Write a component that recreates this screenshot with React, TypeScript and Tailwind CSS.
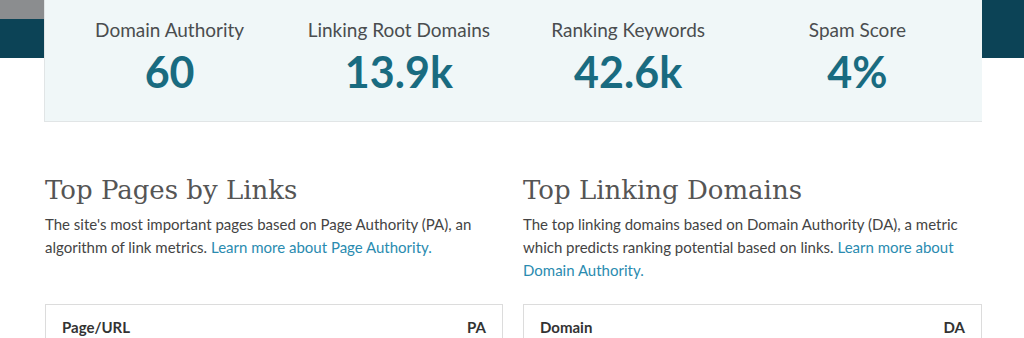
import React from "react";

const stats = [
  { label: "Domain Authority", value: "60" },
  { label: "Linking Root Domains", value: "13.9k" },
  { label: "Ranking Keywords", value: "42.6k" },
  { label: "Spam Score", value: "4%" },
];

function Band({ gray }: { gray: boolean }) {
  return (
    <div className="w-full flex flex-col">
      {gray && <div className="h-[19px] bg-[#8b8d8f]" />}
      <div className={gray ? "h-[39px] bg-[#0c4356]" : "h-[58px] bg-[#0c4356]"} />
    </div>
  );
}

const headingStyle = { fontFamily: "'DejaVu Serif', serif" };

export default function App() {
  return (
    <div
      className="w-[1024px] h-[338px] bg-white overflow-hidden text-[#444]"
      style={{ fontFamily: "Lato, 'Noto Sans', sans-serif" }}
    >
      <div className="flex">
        <div className="w-[44px] shrink-0">
          <Band gray />
        </div>
        <div className="w-[938px] h-[122px] bg-[#f0f7f8] border-b border-l border-[#e1e5e6] grid grid-cols-4 px-[10px]">
          {stats.map((s) => (
            <div key={s.label} className="flex flex-col items-center pt-[17px]">
              <div className="text-[19px] leading-[26px] text-[#4a4d4f]">{s.label}</div>
              <div className="text-[43px] leading-[48px] font-bold text-[#196b80] mt-[5px]">{s.value}</div>
            </div>
          ))}
        </div>
        <div className="flex-1">
          <Band gray={false} />
        </div>
      </div>

      <div className="grid grid-cols-[458px_459px] pl-[45px] gap-x-[20px] mt-[52px]">
        <div>
          <h2 className="text-[26px] leading-[32px] text-[#555]" style={headingStyle}>
            Top Pages by Links
          </h2>
          <p className="mt-[7px] text-[15px] leading-[23px] text-[#444]">
            The site's most important pages based on Page Authority (PA), an algorithm of link metrics.{" "}
            <a className="text-[#2a8bb0]">Learn more about Page Authority.</a>
          </p>
        </div>
        <div>
          <h2 className="text-[26px] leading-[32px] text-[#555]" style={headingStyle}>
            Top Linking Domains
          </h2>
          <p className="mt-[7px] text-[15px] leading-[23px] text-[#444]">
            The top linking domains based on Domain Authority (DA), a metric which predicts ranking potential based on links.{" "}
            <a className="text-[#2a8bb0]">Learn more about Domain Authority.</a>
          </p>
        </div>
        <div className="mt-[22px] border border-[#dcdcdc] h-[60px] flex justify-between px-[16px] pt-[11px] font-bold text-[15px] text-[#333]">
          <span>Page/URL</span>
          <span>PA</span>
        </div>
        <div className="mt-[22px] border border-[#dcdcdc] h-[60px] flex justify-between px-[16px] pt-[11px] font-bold text-[15px] text-[#333]">
          <span>Domain</span>
          <span>DA</span>
        </div>
      </div>
    </div>
  );
}
